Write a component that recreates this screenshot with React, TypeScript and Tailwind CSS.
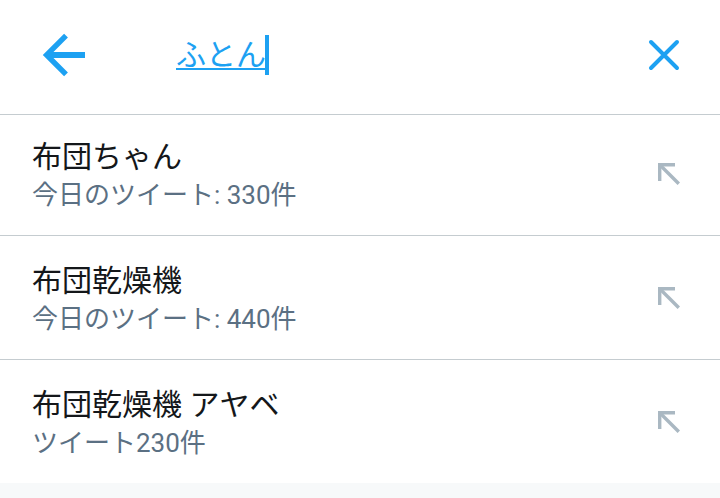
import React, { useState } from "react";

const suggestions = [
  { title: "布団ちゃん", detail: "今日のツイート: 330件" },
  { title: "布団乾燥機", detail: "今日のツイート: 440件" },
  { title: "布団乾燥機 アヤベ", detail: "ツイート230件" },
];

function BackIcon() {
  return (
    <svg className="w-11 h-11" viewBox="0 0 44 44" fill="none" stroke="currentColor" aria-hidden="true">
      <path d="M24 2.6 L4.6 22 L24 41.4" strokeWidth="5.4" />
      <path d="M5 22 H43" strokeWidth="6" />
    </svg>
  );
}

function ClearIcon() {
  return (
    <svg className="w-8 h-8" viewBox="0 0 32 32" fill="none" stroke="currentColor" aria-hidden="true">
      <path d="M3 3 L29 29 M29 3 L3 29" strokeWidth="4" strokeLinecap="round" />
    </svg>
  );
}

function FillIcon() {
  return (
    <svg className="w-6 h-6" viewBox="0 0 24 24" fill="none" stroke="currentColor" strokeWidth="3.4" aria-hidden="true">
      <path d="M19 2.8 H3.7 V19" />
      <path d="M4 3 L22.8 21.8" />
    </svg>
  );
}

export default function App() {
  const [query, setQuery] = useState("ふとん");

  return (
    <div className="min-h-screen bg-[#f7f9fa] font-[Roboto,'Noto_Sans_CJK_JP',sans-serif]">
      <header className="flex items-center h-[115px] pl-[42px] pr-10 pb-1 bg-white border-b border-[#c5ccd0] text-[#1da1f2]">
        <button type="button" aria-label="戻る" className="cursor-pointer">
          <BackIcon />
        </button>
        <div className="flex flex-1 items-center ml-[90px]">
          <input
            type="text"
            aria-label="検索"
            value={query}
            onChange={(e) => setQuery(e.target.value)}
            className="field-sizing-content h-11 text-[30px] leading-[44px] underline decoration-2 underline-offset-3 outline-none caret-transparent"
          />
          <span className="w-1 h-10 -ml-px bg-[#1da1f2]" />
        </div>
        <button type="button" aria-label="クリア" className="cursor-pointer" onClick={() => setQuery("")}>
          <ClearIcon />
        </button>
      </header>

      <ul className="bg-white divide-y divide-[#c5ccd0]">
        {suggestions.map((item) => (
          <li key={item.title} className="flex items-center justify-between pt-6 first:pt-[21px] pb-[23px] pl-8 pr-10">
            <div>
              <p className="text-[30px] leading-[42px] text-[#14171a]">{item.title}</p>
              <p className="text-[26px] leading-[34px] text-[#5b7083]">{item.detail}</p>
            </div>
            <button
              type="button"
              aria-label={`${item.title}を入力`}
              className="text-[#aab8c2] cursor-pointer"
              onClick={() => setQuery(item.title)}
            >
              <FillIcon />
            </button>
          </li>
        ))}
      </ul>
    </div>
  );
}
